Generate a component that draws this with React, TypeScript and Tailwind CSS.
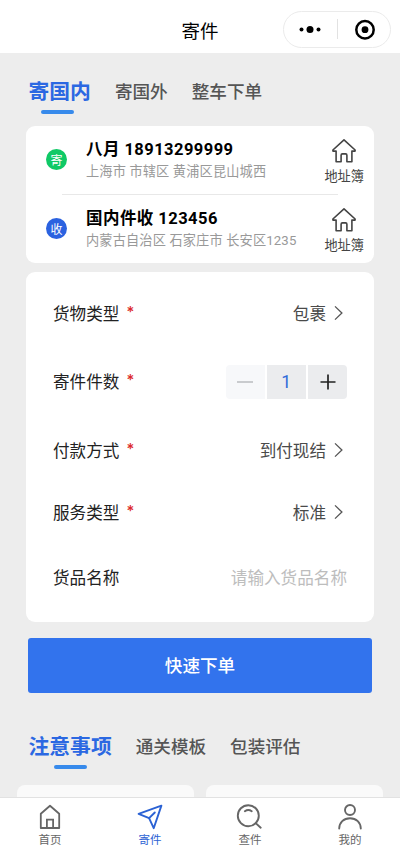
import type { ReactNode } from "react";
import clsx from "clsx";

// --- DATA ---

type Address = {
  tag: string;
  tagClass: string;
  name: string;
  detail: string;
};

const addresses: Address[] = [
  {
    tag: "寄",
    tagClass: "bg-[#0fc966]",
    name: "八月 18913299999",
    detail: "上海市 市辖区 黄浦区昆山城西",
  },
  {
    tag: "收",
    tagClass: "bg-[#2b62e0]",
    name: "国内件收 123456",
    detail: "内蒙古自治区 石家庄市 长安区1235",
  },
];

// --- ICONS ---

function AddressIcon() {
  return (
    <svg width="26" height="26" viewBox="0 0 26 26" fill="none" stroke="#444" strokeWidth="1.6" strokeLinejoin="round">
      <path d="M13 1.800 1.900 12v1.100h3.200v10.600h5v-6.500q0-1.300 1.300-1.300h3.200q1.300 0 1.300 1.300v6.500h5V13.100h3.200V12z" />
    </svg>
  );
}

function HomeIcon() {
  return (
    <svg width="28" height="28" viewBox="0 0 28 28" fill="none" stroke="currentColor" strokeWidth="1.8">
      <path d="M4.800 25V10.800L14 2.800l9.200 8V25z" strokeLinejoin="round" />
      <path d="M10.900 25v-8.300h6.200V25" />
    </svg>
  );
}

function SendIcon() {
  return (
    <svg width="28" height="28" viewBox="0 0 28 28" fill="none" stroke="currentColor" strokeWidth="1.9" strokeLinejoin="round">
      <path d="M25.400 2.600 2.600 10.900l10.500 4.300 4.600 10z" />
      <path d="m13.100 15.200 5.700-5.700" strokeLinecap="round" />
    </svg>
  );
}

function SearchIcon() {
  return (
    <svg width="28" height="28" viewBox="0 0 28 28" fill="none" stroke="currentColor" strokeWidth="1.9" strokeLinecap="round">
      <circle cx="12.300" cy="12.700" r="10.500" />
      <path d="m19.700 20.100 5 4.600M8.900 8.300q3.400-2.500 6.800 0" />
    </svg>
  );
}

function UserIcon() {
  return (
    <svg width="28" height="28" viewBox="0 0 28 28" fill="none" stroke="currentColor" strokeWidth="1.9" strokeLinecap="round">
      <circle cx="14" cy="7" r="5" />
      <path d="M3.200 25.600c0-6 4.500-10.400 10.800-10.400s10.800 4.400 10.800 10.400" />
    </svg>
  );
}

function Chevron() {
  return (
    <svg className="ml-2 mr-1" width="9" height="16" viewBox="0 0 9 16" fill="none" stroke="#555" strokeWidth="1.3">
      <path d="m1 1.400 6.900 6.600L1 14.600" />
    </svg>
  );
}

// --- SECTIONS ---

function Header() {
  return (
    <header className="grid h-[53px] grid-cols-[1fr_auto_1fr] items-center bg-white pt-1.5 pr-[9px]">
      <span />
      <h1 className="pl-[9px] text-[18.500px] leading-6 text-black">寄件</h1>
      <div className="flex h-[37px] w-[108px] items-center justify-self-end rounded-full border border-[#ebebeb]">
        <svg width="106" height="35" viewBox="0 0 106 35">
          <circle cx="17.500" cy="17.500" r="2" />
          <circle cx="26" cy="17.500" r="3.500" />
          <circle cx="34.500" cy="17.500" r="2" />
          <path d="M53.500 7v20" stroke="#e2e2e2" />
          <circle cx="81" cy="17.700" r="8.700" fill="none" stroke="#000" strokeWidth="2.500" />
          <circle cx="81" cy="17.700" r="3.400" />
        </svg>
      </div>
    </header>
  );
}

function Tabs({ items, markClass }: { items: string[]; markClass?: string }) {
  return (
    <div className="flex items-start gap-6 pl-[28.500px]">
      {items.map((item, i) =>
        i === 0 ? (
          <div key={item} className="flex flex-col items-center">
            <span className="text-[20.800px] leading-[30px] font-bold text-[#2b68e2]">{item}</span>
            <span className={clsx("mt-[5px] h-[3.500px] w-[33px] rounded-full bg-[#378aeb]", markClass)} />
          </div>
        ) : (
          <span key={item} className="text-[17.600px] leading-[31px] font-medium text-[#555]">
            {item}
          </span>
        )
      )}
    </div>
  );
}

function AddressRow({ address }: { address: Address }) {
  return (
    <div className="flex h-[68px] items-center pl-5 pr-2.5">
      <span
        className={clsx(
          "mb-px flex size-[21px] items-center justify-center rounded-full text-[12px] leading-none text-white",
          address.tagClass
        )}
      >
        {address.tag}
      </span>
      <div className="ml-[19px] flex-1 pb-px font-['Roboto','Noto_Sans_CJK_SC',sans-serif] whitespace-nowrap">
        <p className="text-[16.500px] leading-[23px] font-bold tracking-[0.450px] text-black">{address.name}</p>
        <p className="text-[13.200px] leading-[21px] tracking-[0.150px] text-[#999]">{address.detail}</p>
      </div>
      <button className="flex flex-col items-center pt-1">
        <AddressIcon />
        <span className="mt-0.5 text-[13.200px] leading-5 text-[#444]">地址簿</span>
      </button>
    </div>
  );
}

function FormRow({
  label,
  required,
  className,
  children,
}: {
  label: string;
  required?: boolean;
  className: string;
  children: ReactNode;
}) {
  return (
    <div className={clsx("flex items-center justify-between pl-[27px] pr-[27px] text-[16.600px]", className)}>
      <span className="flex items-center text-[#222]">
        {label}
        {required && <span className="mb-0.5 ml-[7px] font-['Inter',sans-serif] text-[15px] font-medium text-[#dc2a2a]">*</span>}
      </span>
      <span className="flex items-center text-[#4a4a4a]">{children}</span>
    </div>
  );
}

function Stepper() {
  return (
    <div className="flex gap-[2.500px]">
      <button className="flex h-[34px] w-[38.500px] items-center justify-center rounded-l bg-[#f7f8fa]">
        <span className="h-0.5 w-4 bg-[#c9cbce]" />
      </button>
      <span className="flex h-[34px] w-[38.500px] items-center justify-center bg-[#ebecee] pt-0.5 font-['Roboto',sans-serif] text-[17.500px] text-[#2f6bd9]">
        1
      </span>
      <button className="flex h-[34px] w-[39px] items-center justify-center rounded-r bg-[#ebecee]">
        <svg width="16" height="16" viewBox="0 0 16 16" stroke="#222" strokeWidth="1.700">
          <path d="M.5 8h15M8 .5v15" />
        </svg>
      </button>
    </div>
  );
}

const navItems = [
  { label: "首页", icon: <HomeIcon /> },
  { label: "寄件", icon: <SendIcon />, active: true },
  { label: "查件", icon: <SearchIcon /> },
  { label: "我的", icon: <UserIcon /> },
];

export default function App() {
  return (
    <div className="flex h-[853px] w-[400px] flex-col overflow-hidden bg-[#ededed] font-['Noto_Sans_CJK_SC',sans-serif]">
      <Header />

      <main className="min-h-0 flex-1 overflow-hidden pt-[22px]">
        <Tabs items={["寄国内", "寄国外", "整车下单"]} markClass="mr-[5px]" />

        <section className="mx-[26px] mt-[12.500px] h-[136.500px] rounded-[9px] bg-white">
          <AddressRow address={addresses[0]} />
          <div className="mx-9 h-px bg-[#e8e8e8]" />
          <AddressRow address={addresses[1]} />
        </section>

        <section className="mx-[26px] mt-[9.500px] h-[350px] rounded-[9px] bg-white pt-[7px]">
          <FormRow label="货物类型" required className="h-[68px]">
            包裹
            <Chevron />
          </FormRow>
          <FormRow label="寄件件数" required className="h-[69px]">
            <Stepper />
          </FormRow>
          <FormRow label="付款方式" required className="h-[69px]">
            到付现结
            <Chevron />
          </FormRow>
          <FormRow label="服务类型" required className="h-[54px]">
            标准
            <Chevron />
          </FormRow>
          <FormRow label="货品名称" className="h-[77px]">
            <span className="text-[#bdbdbd]">请输入货品名称</span>
          </FormRow>
        </section>

        <button className="mx-[28px] mt-[15.500px] mb-[37.500px] block h-[55px] w-[344px] rounded-[3px] bg-[#3273ed] text-[17.600px] font-medium text-white">
          快速下单
        </button>

        <Tabs items={["注意事项", "通关模板", "包装评估"]} />

        <div className="mt-4 flex gap-3 px-[17px]">
          <div className="h-20 flex-1 rounded-lg bg-[#fafafa]" />
          <div className="h-20 flex-1 rounded-lg bg-[#fafafa]" />
        </div>
      </main>

      <nav className="grid h-14 grid-cols-4 border-t border-[#e2e2e2] bg-white">
        {navItems.map((item) => (
          <button
            key={item.label}
            className={clsx("flex flex-col items-center pt-[5px]", item.active ? "text-[#2b62d4]" : "text-[#666]")}
          >
            {item.icon}
            <span className="text-[11.500px] leading-[17px]">{item.label}</span>
          </button>
        ))}
      </nav>
    </div>
  );
}
